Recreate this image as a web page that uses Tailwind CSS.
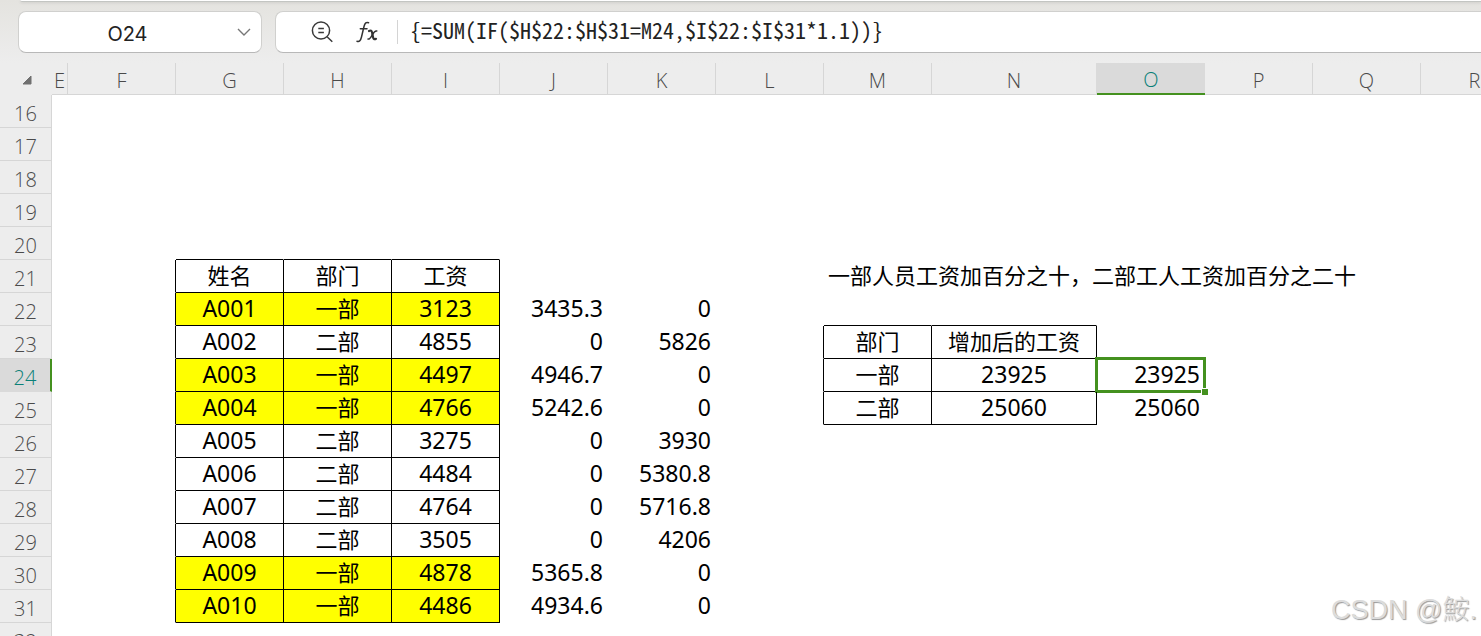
<!DOCTYPE html>
<html lang="zh-CN">
<head>
<meta charset="utf-8">
<meta name="viewport" content="width=device-width, initial-scale=1">
<title>工资表</title>
<script src="https://cdn.jsdelivr.net/npm/@tailwindcss/browser@4"></script>
</head>
<body class="relative h-screen overflow-hidden bg-[#ededed] text-black font-['Noto_Sans_CJK_SC',sans-serif]">
<header class="bg-linear-to-b from-[#e4e3df] to-[#ededed] pb-[10px]">
  <div class="ml-5 h-[2px] rounded-bl border-b border-[#c3c5c2] bg-white shadow-sm"></div>
  <div class="flex gap-[13px] pl-[18px] pt-[9px]">
    <div class="flex h-[42px] w-[244px] shrink-0 items-center rounded-lg border border-[#d0d0ce] border-b-[#b8b8b8] bg-white">
      <input aria-label="名称框" type="text" value="O24" class="w-0 grow bg-transparent pt-[3px] text-center font-['Inter',sans-serif] text-[20px] leading-8 text-[#222] outline-none">
      <button type="button" aria-label="展开名称框" class="mr-[9px] shrink-0">
        <svg width="16" height="16" viewBox="0 0 16 16" fill="none" stroke="#777" stroke-width="1.4"><path d="M2 5l6 6 6-6"/></svg>
      </button>
    </div>
    <div class="flex h-[42px] grow items-center rounded-l-lg border border-r-0 border-[#d0d0ce] border-b-[#b8b8b8] bg-white">
      <button type="button" aria-label="查看公式" class="ml-[35px]">
        <svg width="24" height="24" viewBox="0 0 24 24" fill="none" stroke="#3a3a3a" stroke-width="1.5"><circle cx="10" cy="10.500" r="8.600"/><path d="M7.300 8.600h5.600M7.300 12.400h5.600M16.300 17l5 4.800"/></svg>
      </button>
      <button type="button" aria-label="插入函数" class="ml-[20px]">
        <svg width="26" height="26" viewBox="0 0 26 26" fill="none" stroke="#333" stroke-linecap="round"><path stroke-width="1.500" d="M2 22.300c2.400.9 3.600-.8 4.500-4.300L9 7.500c.9-3.700 2.400-4.700 4.600-3.700M5.300 9.800h6.700"/><path stroke-width="2.200" d="M14 12c1.800-1 2.700-.4 3.100 1.600l.9 4.400c.4 2.100 1.400 2.700 3 1.800"/><path stroke-width="1.500" d="M21.800 12c-1.500-.6-2.500.4-4.300 3.500s-2.800 5.200-4.500 4.500"/></svg>
      </button>
      <span class="ml-[16px] h-6 w-px bg-[#d4d4d4]"></span>
      <input aria-label="编辑栏" type="text" value="{=SUM(IF($H$22:$H$31=M24,$I$22:$I$31*1.1))}" class="ml-[12px] w-0 grow bg-transparent pb-[6px] font-['Noto_Sans_Mono_CJK_SC','Liberation_Mono',monospace] text-[22px] leading-8 font-light text-[#222] outline-none">
    </div>
  </div>
</header>
<main class="overflow-hidden">
  <table id="sheet" class="w-[1529px] table-fixed border-separate border-spacing-0 bg-white">
    <colgroup>
      <col class="w-[52px]"><col class="w-[16px]"><col class="w-[108px]"><col class="w-[108px]"><col class="w-[108px]"><col class="w-[108px]"><col class="w-[108px]"><col class="w-[108px]"><col class="w-[108px]"><col class="w-[108px]"><col class="w-[165px]"><col class="w-[108px]"><col class="w-[108px]"><col class="w-[108px]"><col class="w-[108px]">
    </colgroup>
    <thead><tr id="head"></tr></thead>
    <tbody id="body"></tbody>
  </table>
</main>
<div class="absolute right-1 bottom-2 font-['Liberation_Sans','Noto_Sans_CJK_SC',sans-serif] text-[27px] leading-9 font-light text-[#dcdcdc] [text-shadow:1px_1px_1px_#999]">CSDN @鮟.</div>
<script>
const cols = ['E','F','G','H','I','J','K','L','M','N','O','P','Q','R'];
const staff = [
  ['A001','一部','3123','3435.3','0'], ['A002','二部','4855','0','5826'],
  ['A003','一部','4497','4946.7','0'], ['A004','一部','4766','5242.6','0'],
  ['A005','二部','3275','0','3930'], ['A006','二部','4484','0','5380.8'],
  ['A007','二部','4764','0','5716.8'], ['A008','二部','3505','0','4206'],
  ['A009','一部','4878','5365.8','0'], ['A010','一部','4486','4934.6','0']
];
const cells = {G21:'姓名', H21:'部门', I21:'工资', M21:'一部人员工资加百分之十，二部工人工资加百分之二十',
  M23:'部门', N23:'增加后的工资', M24:'一部', N24:'23925', O24:'23925', M25:'二部', N25:'25060', O25:'25060'};
staff.forEach((r, i) => r.forEach((v, j) => { cells['GHIJK'[j] + (22 + i)] = v; }));

const boxed = (c, r) => ('GHI'.includes(c) && r >= 21 && r <= 31) || ('MN'.includes(c) && r >= 23 && r <= 25);
const headBase = "h-8 overflow-hidden border-b p-0 pt-1 font-['Open_Sans',sans-serif] text-[20px] leading-6 font-light ";
let head = '<th class="h-8 bg-[#ededed] p-0"><button type="button" aria-label="全选" class="ml-[22px] mt-[2px] block"><svg width="10" height="10" viewBox="0 0 10 10"><path d="M9 1v8H1z" fill="#707070" stroke="#707070" stroke-linejoin="round"/></svg></button></th>';
cols.forEach(c => {
  head += '<th scope="col" class="' + headBase + (c === 'O'
    ? 'border-b-2 border-[#44911f] bg-[#dadada] text-[#0a8078]'
    : c === 'N' ? 'border-r border-r-[#dadada] border-b-[#d6d6d6] bg-[#ededed] text-[#4a4a4a]'
    : 'border-r border-[#d6d6d6] bg-[#ededed] text-[#4a4a4a]') + '">' + c + '</th>';
});
document.getElementById('head').innerHTML = head;

let body = '';
for (let r = 16; r <= 32; r++) {
  body += '<tr><th scope="row" class="h-[33px] p-0 pt-[6px] font-[\'Open_Sans\',sans-serif] text-[20px] leading-6 font-light ' + (r === 24
    ? 'border-r-2 border-b border-r-[#44911f] border-b-[#dadada] bg-[#dadada] text-[#0a8078]'
    : 'border-r border-b border-[#d6d6d6] bg-[#ededed] text-[#4a4a4a]') + '">' + r + '</th>';
  cols.forEach((c, i) => {
    const v = cells[c + r] || '';
    const right = boxed(c, r) || (cols[i + 1] && boxed(cols[i + 1], r));
    const bottom = boxed(c, r) || boxed(c, r + 1);
    const yellow = 'GHI'.includes(c) && cells['H' + r] === '一部';
    const latin = /^[A\d]/.test(v);
    let k = 'relative p-0 border-r border-b whitespace-nowrap leading-7 ';
    k += right ? 'border-r-black ' : 'border-r-transparent ';
    k += bottom ? 'border-b-black ' : 'border-b-transparent ';
    k += yellow ? 'bg-[#ffff00] ' : '';
    k += latin ? "pb-[2px] font-['Noto_Sans',sans-serif] text-[23px] " : 'pb-1 text-[22px] ';
    k += boxed(c, r) ? 'text-center' : 'JKO'.includes(c) ? 'text-right pr-1' : 'pl-1';
    const mark = c + r === 'O24' ? '<span class="absolute -top-[2px] -left-[2px] -right-[2px] -bottom-[2px] border-3 border-[#44911f]"><span class="absolute -right-[5px] -bottom-[5px] size-[7px] border-t border-l border-white bg-[#44911f]"></span></span>' : '';
    body += '<td class="' + k + '">' + v + mark + '</td>';
  });
  body += '</tr>';
}
document.getElementById('body').innerHTML = body;
</script>
</body>
</html>
